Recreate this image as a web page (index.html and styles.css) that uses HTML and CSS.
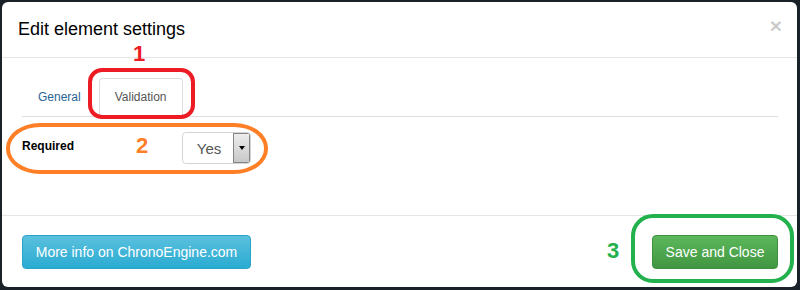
FILE: index.html
```html
<!DOCTYPE html>
<html>
<head>
<meta charset="utf-8">
<link rel="stylesheet" href="styles.css">
</head>
<body>
<div class="modal">
  <div class="modal-header">
    <h4 class="modal-title">Edit element settings</h4>
    <span class="close">×</span>
  </div>
  <div class="modal-body">
    <ul class="tabs">
      <li class="tab"><a>General</a></li>
      <li class="tab active"><a>Validation</a></li>
    </ul>
    <div class="form-row">
      <label class="field-label">Required</label>
      <div class="select">
        <span class="select-value">Yes</span>
        <span class="select-arrow"><span class="tri"></span></span>
      </div>
    </div>
  </div>
  <div class="modal-footer">
    <button class="btn btn-info">More info on ChronoEngine.com</button>
    <button class="btn btn-success">Save and Close</button>
  </div>

  <div class="mark mark-red"></div>
  <div class="mark mark-orange"></div>
  <div class="mark mark-green"></div>
  <div class="num num-1">1</div>
  <div class="num num-2">2</div>
  <div class="num num-3">3</div>
</div>
</body>
</html>
```

FILE: styles.css
```css
* { box-sizing: border-box; }
html, body { margin: 0; padding: 0; }
body {
  background: #1b2128;
  width: 800px;
  height: 290px;
  overflow: hidden;
  font-family: "Liberation Sans", Arial, sans-serif;
  color: #333;
}
.modal {
  position: relative;
  margin: 2px 3px 3px 2px;
  width: 795px;
  height: 285px;
  background: #fff;
  border-radius: 6px;
}
.modal-header {
  display: flex;
  justify-content: space-between;
  align-items: flex-start;
  padding: 15px 15px 15px 16px;
  border-bottom: 1px solid #e5e5e5;
  height: 56px;
}
.modal-title {
  margin: 0;
  font-size: 18px;
  font-weight: normal;
  line-height: 25.7px;
  color: #000;
}
.close {
  font-size: 21px;
  font-weight: bold;
  line-height: 1;
  color: #000;
  opacity: 0.2;
  margin-top: -2px;
}
.modal-body {
  height: 157px;
  padding: 20px 19px 0 20px;
}
.tabs {
  list-style: none;
  margin: 0;
  padding: 0;
  display: flex;
  border-bottom: 1px solid #ddd;
  height: 39px;
}
.tab {
  margin-right: 2px;
  margin-bottom: -1px;
}
.tab a {
  display: block;
  padding: 10px 15px;
  font-size: 12px;
  line-height: 17px;
  color: #2a6496;
  border: 1px solid transparent;
  border-radius: 4px 4px 0 0;
}
.tab.active a {
  color: #555;
  background: #fff;
  border-color: #ddd #ddd transparent #ddd;
}
.form-row {
  display: flex;
  align-items: center;
  margin-top: 15px;
  height: 32px;
}
.field-label {
  width: 160px;
  font-size: 12px;
  font-weight: bold;
  color: #000;
  padding-bottom: 4px;
}
.select {
  display: flex;
  width: 69px;
  height: 32px;
  border: 1px solid #d4d4d4;
  border-radius: 4px;
  background: #fff;
  overflow: hidden;
}
.select-value {
  flex: 1;
  display: flex;
  align-items: center;
  justify-content: center;
  font-size: 15px;
  color: #555;
  padding-left: 2px;
}
.select-arrow {
  width: 17px;
  display: flex;
  align-items: center;
  justify-content: center;
  background: linear-gradient(#ececec, #c8c8c8);
  border: 1px solid #858585;
}
.tri {
  width: 0;
  height: 0;
  border-left: 3.5px solid transparent;
  border-right: 3.5px solid transparent;
  border-top: 4px solid #000;
}
.modal-footer {
  display: flex;
  justify-content: space-between;
  align-items: flex-start;
  border-top: 1px solid #e5e5e5;
  padding: 19px 19px 18px 20px;
}
.btn {
  font-family: "Liberation Sans", Arial, sans-serif;
  font-size: 14px;
  line-height: 20px;
  padding: 6px 12px;
  height: 34px;
  border-radius: 4px;
  color: #fff;
  cursor: pointer;
}
.btn-info {
  background: linear-gradient(#5bc0de, #2aabd2);
  border: 1px solid #28a4c9;
  width: 229px;
}
.btn-success {
  background: linear-gradient(#5cb85c, #419641);
  border: 1px solid #3e8f3e;
  width: 126px;
}
.mark {
  position: absolute;
  border-style: solid;
  border-width: 4px;
}
.mark-red {
  left: 86px; top: 66px; width: 107px; height: 51px;
  border-color: #ed1c24;
  border-radius: 14px;
}
.mark-orange {
  left: 4px; top: 121px; width: 262px; height: 51px;
  border-color: #ff7f27;
  border-radius: 34px / 25px;
}
.mark-green {
  left: 629px; top: 212px; width: 163px; height: 69px;
  border-color: #22b14c;
  border-radius: 22px;
}
.num {
  position: absolute;
  font-family: "Liberation Sans", Arial, sans-serif;
  font-weight: bold;
  font-size: 22px;
  line-height: 22px;
}
.num-1 { left: 131px; top: 41px; color: #ed1c24; }
.num-2 { left: 134px; top: 133px; color: #ff7f27; }
.num-3 { left: 605px; top: 238px; color: #22b14c; }
```
